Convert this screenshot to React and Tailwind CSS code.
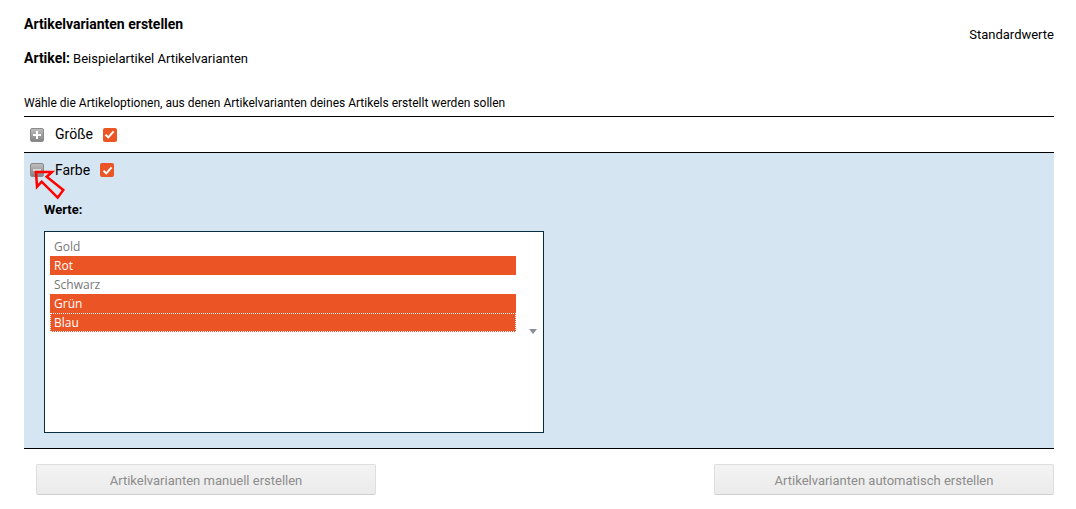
const VALUES = [
  { label: 'Gold', selected: false },
  { label: 'Rot', selected: true },
  { label: 'Schwarz', selected: false },
  { label: 'Grün', selected: true },
  { label: 'Blau', selected: true, focused: true },
]

function Toggle({ open }) {
  return (
    <span className="flex h-[14px] w-[14px] shrink-0 items-center justify-center rounded-[2px] border border-[#8a8a8a] bg-gradient-to-b from-[#bdbdbd] to-[#858585]">
      <svg width="8" height="8" viewBox="0 0 8 8">
        <rect x="0" y="3" width="8" height="2" fill={open ? '#d9d9d9' : '#fff'} />
        {!open && <rect x="3" y="0" width="2" height="8" fill="#fff" />}
      </svg>
    </span>
  )
}

function Check() {
  return (
    <span className="flex h-[14px] w-[14px] shrink-0 items-center justify-center rounded-[2px] bg-[#eb5424]">
      <svg width="11" height="11" viewBox="0 0 11 11" fill="none">
        <path d="M1.5 5.7 L4.3 8.4 L9.6 2.4" stroke="#fff" strokeWidth="2" />
      </svg>
    </span>
  )
}

function Arrow() {
  return (
    <svg className="absolute left-[34px] top-[170px]" width="32" height="30" viewBox="0 0 32 30" fill="none">
      <path
        d="M2 2 L18 2 L12.7 6.7 L29.3 20 L23.7 27.7 L7.7 11.7 L3 16.7 Z"
        stroke="#ff0000"
        strokeWidth="2.5"
      />
    </svg>
  )
}

function ActionButton({ children }) {
  return (
    <button className="h-[31px] w-[340px] rounded-[2px] border border-[#dedede] border-b-[#cfcfcf] bg-gradient-to-b from-[#f3f3f3] to-[#ebebeb] pt-[2px] text-[13px] text-[#8c8c8c]">
      {children}
    </button>
  )
}

export default function App() {
  return (
    <div className="relative h-[509px] w-[1076px] overflow-hidden bg-white px-[22px] pt-[16px] font-['Roboto',sans-serif] text-black">
      <div className="ml-[2px] flex items-start justify-between">
        <div>
          <h1 className="text-[14px] leading-[16px] font-bold">Artikelvarianten erstellen</h1>
          <p className="mt-[18px] text-[13px] leading-[16px]">
            <span className="text-[14px] font-bold">Artikel:</span> Beispielartikel Artikelvarianten
          </p>
        </div>
        <span className="mt-[11px] text-[13px] leading-[16px]">Standardwerte</span>
      </div>

      <p className="mt-[28px] ml-[2px] text-[12px] leading-[16px]">
        Wähle die Artikeloptionen, aus denen Artikelvarianten deines Artikels erstellt werden sollen
      </p>

      <div className="mt-[5px] ml-[2px] border-t border-black">
        <div className="flex h-[35px] items-center pl-[6px]">
          <Toggle />
          <span className="ml-[11px] text-[14px]">Größe</span>
          <span className="ml-[10px]"><Check /></span>
        </div>
      </div>

      <div className="ml-[2px] h-[297px] border-y border-black bg-[#d6e5f2] pt-[9px]">
        <div className="flex items-center pl-[6px]">
          <Toggle open />
          <span className="ml-[11px] text-[14px] leading-[16px]">Farbe</span>
          <span className="ml-[10px]"><Check /></span>
        </div>
        <p className="mt-[24px] ml-[20px] text-[13px] leading-[16px] font-bold">Werte:</p>
        <div className="relative mt-[13px] ml-[20px] h-[202px] w-[500px] border border-[#0a2a40] bg-white pt-[5px] pl-[5px] font-['Open_Sans',sans-serif]">
          {VALUES.map((v) => (
            <div
              key={v.label}
              className={`h-[19px] w-[466px] pl-[4px] text-[12px] leading-[19px] ${
                v.selected ? 'bg-[#eb5424] text-white' : 'text-[#777777]'
              } ${v.focused ? 'outline-1 -outline-offset-1 outline-dotted outline-white' : ''}`}
            >
              {v.label}
            </div>
          ))}
          <svg className="absolute right-[6px] top-[97px]" width="8" height="5" viewBox="0 0 8 5">
            <path d="M0 0 H8 L4 5 Z" fill="#8a8f96" />
          </svg>
        </div>
      </div>

      <div className="mt-[15px] ml-[14px] flex justify-between">
        <ActionButton>Artikelvarianten manuell erstellen</ActionButton>
        <ActionButton>Artikelvarianten automatisch erstellen</ActionButton>
      </div>

      <Arrow />
    </div>
  )
}
